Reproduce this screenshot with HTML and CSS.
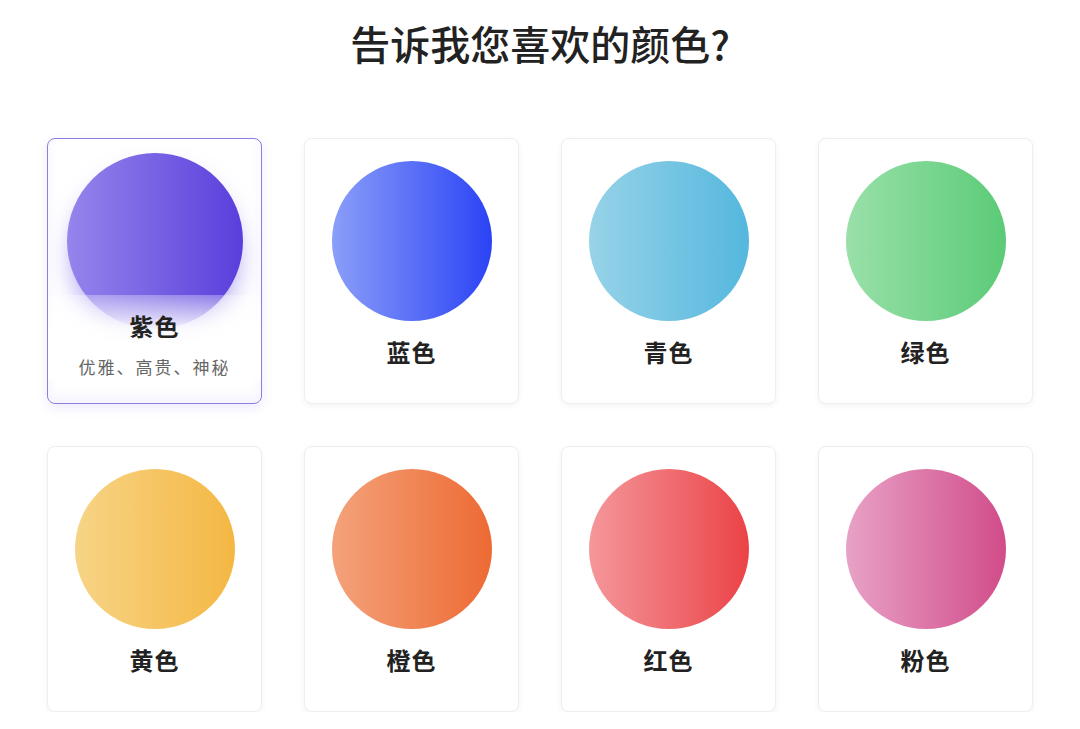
FILE: index.html
```html
<!DOCTYPE html>
<html lang="zh-CN">
<head>
    <meta charset="UTF-8">
    <meta name="viewport" content="width=device-width, initial-scale=1.0">
    <title>颜色偏好</title>
    <link rel="stylesheet" href="styles.css">
</head>
<body>
    <div class="page">
        <h1>告诉我您喜欢的颜色?</h1>
        <div class="color-grid">
            <div class="color-card selected">
                <div class="swatch purple"></div>
                <div class="info">
                    <div class="name">紫色</div>
                    <div class="desc">优雅、高贵、神秘</div>
                </div>
            </div>
            <div class="color-card">
                <div class="swatch blue"></div>
                <div class="info"><div class="name">蓝色</div></div>
            </div>
            <div class="color-card">
                <div class="swatch cyan"></div>
                <div class="info"><div class="name">青色</div></div>
            </div>
            <div class="color-card">
                <div class="swatch green"></div>
                <div class="info"><div class="name">绿色</div></div>
            </div>
            <div class="color-card">
                <div class="swatch yellow"></div>
                <div class="info"><div class="name">黄色</div></div>
            </div>
            <div class="color-card">
                <div class="swatch orange"></div>
                <div class="info"><div class="name">橙色</div></div>
            </div>
            <div class="color-card">
                <div class="swatch red"></div>
                <div class="info"><div class="name">红色</div></div>
            </div>
            <div class="color-card">
                <div class="swatch pink"></div>
                <div class="info"><div class="name">粉色</div></div>
            </div>
        </div>
    </div>
</body>
</html>
```

FILE: styles.css
```css
body {
    margin: 0;
    background-color: #ffffff;
    font-family: "Noto Sans CJK SC", "Noto Sans", sans-serif;
    color: #222;
}

.page {
    width: 986px;
    margin: 0 auto;
    padding-top: 15px;
}

h1 {
    margin: 0 0 67px;
    font-size: 40px;
    line-height: 56px;
    font-weight: 500;
    text-align: center;
    color: #222;
}

.color-grid {
    display: grid;
    grid-template-columns: repeat(4, 1fr);
    gap: 42px;
}

.color-card {
    box-sizing: border-box;
    height: 266px;
    padding-top: 22px;
    border: 1px solid #eeeeee;
    border-radius: 8px;
    background-color: #fff;
    box-shadow: 0 2px 6px rgba(0, 0, 0, 0.05);
    display: flex;
    flex-direction: column;
    align-items: center;
    overflow: hidden;
}

.swatch {
    width: 160px;
    height: 160px;
    border-radius: 50%;
    flex-shrink: 0;
}

.info {
    position: relative;
    align-self: stretch;
    padding-top: 16px;
    text-align: center;
}

.name {
    font-size: 24px;
    line-height: 30px;
    font-weight: 700;
    letter-spacing: 1px;
    color: #222;
}

.desc {
    display: none;
    margin-top: 14px;
    font-size: 17px;
    line-height: 24px;
    letter-spacing: 2px;
    color: #666;
}

/* selected state */
.color-card.selected {
    border-color: #8a80e0;
    box-shadow: 0 4px 12px rgba(110, 90, 230, 0.12), inset 0 -6px 12px rgba(120, 100, 235, 0.08);
}

.selected .swatch {
    transform: scale(1.1);
    box-shadow: 0 14px 24px -6px rgba(100, 80, 230, 0.6);
}

.selected .info {
    transform: translateY(-26px);
    background: linear-gradient(to bottom, rgba(255, 255, 255, 0.3) 0%, rgba(255, 255, 255, 0.9) 40%, #fff 60%);
}

.selected .desc {
    display: block;
}

.purple { background: linear-gradient(to right, #9585ec, #5a3edc); }
.blue   { background: linear-gradient(to right, #8b9ef9, #2b43f5); }
.cyan   { background: linear-gradient(to right, #97d3e8, #55b7de); }
.green  { background: linear-gradient(to right, #99e0a9, #5bcb77); }
.yellow { background: linear-gradient(to right, #f7d486, #f4b743); }
.orange { background: linear-gradient(to right, #f4a27b, #ed6a33); }
.red    { background: linear-gradient(to right, #f4979b, #eb4347); }
.pink   { background: linear-gradient(to right, #e8a2c6, #d14c8a); }
```
